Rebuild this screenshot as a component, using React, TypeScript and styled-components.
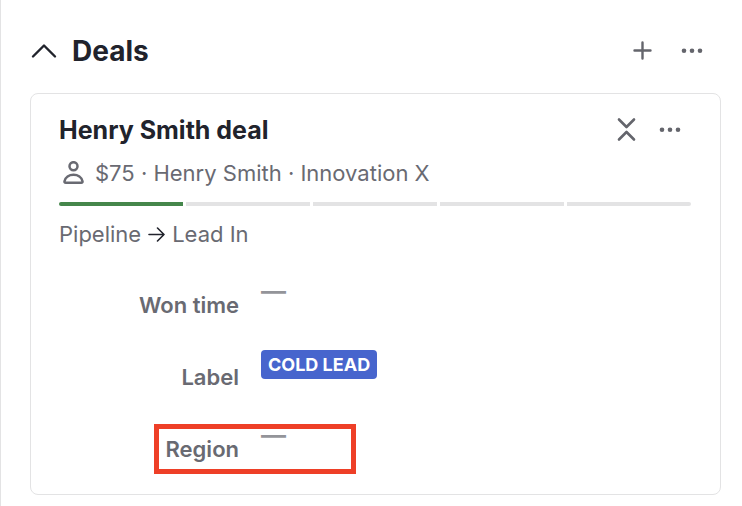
import React from "react";
import styled, { createGlobalStyle, css } from "styled-components";

const GlobalStyle = createGlobalStyle`
  * { box-sizing: border-box; }
  body {
    margin: 0;
    background: #ffffff;
    font-family: Inter, "Liberation Sans", sans-serif;
    color: #21232c;
  }
`;

const Panel = styled.section`
  min-height: 100vh;
  border-left: 1px solid #e3e3e4;
  padding: 31px 21px 11px 29px;
`;

const PanelHeader = styled.header`
  display: flex;
  align-items: center;
  justify-content: space-between;
  height: 40px;
  margin-bottom: 22px;
  padding-right: 15px;
`;

const ToggleGroup = styled.div`
  display: flex;
  align-items: center;
  gap: 14px;
`;

const PanelTitle = styled.h2`
  margin: 0;
  font-size: 28px;
  line-height: 40px;
  font-weight: 700;
`;

const Actions = styled.div<{ $gap: number }>`
  display: flex;
  align-items: center;
  gap: ${(p) => p.$gap}px;
`;

const IconButton = styled.button<{ $dark?: boolean }>`
  display: flex;
  align-items: center;
  justify-content: center;
  width: 28px;
  height: 32px;
  padding: 0;
  border: 0;
  background: none;
  cursor: pointer;
  color: ${(p) => (p.$dark ? "#21232c" : "#64656c")};
`;

const Card = styled.article`
  border: 1px solid #e3e3e4;
  border-radius: 8px;
  padding: 20px 29px 9px 28px;
`;

const CardHeader = styled.div`
  display: flex;
  align-items: center;
  justify-content: space-between;
  padding-right: 7px;
`;

const DealTitle = styled.h3`
  margin: 0;
  font-size: 25px;
  line-height: 32px;
  font-weight: 650;
`;

const TextLine = styled.div`
  display: flex;
  align-items: center;
  gap: 7px;
  font-size: 22px;
  line-height: 32px;
  color: #696a72;
  white-space: nowrap;
`;

const MetaLine = styled(TextLine)`
  margin: 11px 0 13px;
  gap: 10px;
  padding-left: 3px;
`;

const Stages = styled.div`
  display: flex;
  gap: 3px;
  height: 4px;
  margin-bottom: 12px;
  border-radius: 2px;
  overflow: hidden;
`;

const Stage = styled.div<{ $done?: boolean }>`
  flex: 1;
  background: ${(p) => (p.$done ? "#45864b" : "#e3e3e4")};
`;

const Fields = styled.dl`
  margin: 19px 0 0;
`;

const Field = styled.div`
  position: relative;
  display: grid;
  grid-template-columns: 180px 1fr;
  column-gap: 22px;
  height: 72px;
`;

const FieldName = styled.dt`
  align-self: center;
  text-align: right;
  font-size: 22px;
  line-height: 32px;
  font-weight: 600;
  color: #696a72;
`;

const FieldValue = styled.dd<{ $empty?: boolean }>`
  margin: 0;
  padding-top: 9px;
  font-size: 22px;
  line-height: 29px;
  ${(p) =>
    p.$empty &&
    css`
      padding-top: 8px;
      font-size: 25px;
      font-weight: 600;
      color: #939499;
    `}
`;

const Badge = styled.span`
  display: block;
  width: fit-content;
  padding: 0 7px;
  border-radius: 4px;
  background: #4765cd;
  color: #ffffff;
  font-size: 18px;
  line-height: 29px;
  font-weight: 700;
`;

const Highlight = styled.div`
  position: absolute;
  top: 11px;
  left: 95px;
  width: 202px;
  height: 50px;
  border: 5px solid #ee3f27;
  pointer-events: none;
`;

const ChevronUp = () => (
  <svg width="28" height="16" viewBox="0 0 28 16" fill="none" stroke="currentColor" strokeWidth="2.4" strokeLinecap="round" strokeLinejoin="round" aria-hidden="true">
    <path d="M3 13.500 14 2.500l11 11" />
  </svg>
);

const Plus = () => (
  <svg width="20" height="20" viewBox="0 0 20 20" fill="none" stroke="currentColor" strokeWidth="2.400" strokeLinecap="round" aria-hidden="true">
    <path d="M10.500 1.500v16M2.500 9.500h16" />
  </svg>
);

const Dots = () => (
  <svg width="24" height="6" viewBox="0 0 24 6" fill="currentColor" aria-hidden="true">
    <circle cx="4" cy="2.700" r="2.300" />
    <circle cx="12" cy="2.700" r="2.300" />
    <circle cx="20" cy="2.700" r="2.300" />
  </svg>
);

const Collapse = () => (
  <svg width="20" height="26" viewBox="0 0 20 26" fill="none" stroke="currentColor" strokeWidth="2.600" strokeLinecap="round" strokeLinejoin="round" aria-hidden="true">
    <path d="m3 2.500 7.500 7.500 7.500-7.500M3 22.500l7.500-7.500 7.500 7.500" />
  </svg>
);

const Person = () => (
  <svg width="23" height="24" viewBox="0 0 23 24" fill="none" stroke="currentColor" strokeWidth="2.500" strokeLinejoin="round" aria-hidden="true">
    <circle cx="11.500" cy="5.200" r="4" />
    <path d="M3.800 21.800c-1.200 0-1.500-.8-1.300-1.600.9-3.900 4.500-6.500 9-6.500s8.100 2.600 9 6.500c.2.800-.1 1.600-1.300 1.600z" />
  </svg>
);

const ArrowRight = () => (
  <svg width="17" height="16" viewBox="0 0 17 16" fill="none" stroke="#21232c" strokeWidth="1.600" strokeLinecap="round" strokeLinejoin="round" aria-hidden="true">
    <path d="M1 8.500h15M9.500 2 16 8.500 9.500 15" />
  </svg>
);

const stages = [true, false, false, false, false];

export default function App() {
  return (
    <>
      <GlobalStyle />
      <Panel>
        <PanelHeader>
          <ToggleGroup>
            <IconButton $dark aria-label="Collapse deals">
              <ChevronUp />
            </IconButton>
            <PanelTitle>Deals</PanelTitle>
          </ToggleGroup>
          <Actions $gap={22}>
            <IconButton aria-label="Add deal">
              <Plus />
            </IconButton>
            <IconButton aria-label="More deal options">
              <Dots />
            </IconButton>
          </Actions>
        </PanelHeader>
        <Card>
          <CardHeader>
            <DealTitle>Henry Smith deal</DealTitle>
            <Actions $gap={16}>
              <IconButton aria-label="Collapse card">
                <Collapse />
              </IconButton>
              <IconButton aria-label="More options">
                <Dots />
              </IconButton>
            </Actions>
          </CardHeader>
          <MetaLine>
            <Person />
            <span>$75 · Henry Smith · Innovation X</span>
          </MetaLine>
          <Stages>
            {stages.map((done, i) => (
              <Stage key={i} $done={done} />
            ))}
          </Stages>
          <TextLine>
            <span>Pipeline</span>
            <ArrowRight />
            <span>Lead In</span>
          </TextLine>
          <Fields>
            <Field>
              <FieldName>Won time</FieldName>
              <FieldValue $empty>—</FieldValue>
            </Field>
            <Field>
              <FieldName>Label</FieldName>
              <FieldValue>
                <Badge>COLD LEAD</Badge>
              </FieldValue>
            </Field>
            <Field>
              <FieldName>Region</FieldName>
              <FieldValue $empty>—</FieldValue>
              <Highlight />
            </Field>
          </Fields>
        </Card>
      </Panel>
    </>
  );
}
